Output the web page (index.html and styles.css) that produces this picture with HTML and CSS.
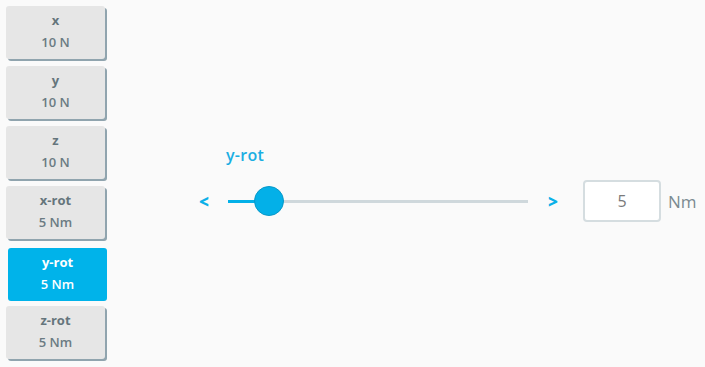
FILE: index.html
```html
<!DOCTYPE html>
<html>
<head>
<meta charset="utf-8">
<link rel="stylesheet" href="styles.css">
</head>
<body>
<div class="app">
  <nav class="side">
    <div class="btn"><span class="name">x</span><span class="val">10 N</span></div>
    <div class="btn"><span class="name">y</span><span class="val">10 N</span></div>
    <div class="btn"><span class="name">z</span><span class="val">10 N</span></div>
    <div class="btn"><span class="name">x-rot</span><span class="val">5 Nm</span></div>
    <div class="btn active"><span class="name">y-rot</span><span class="val">5 Nm</span></div>
    <div class="btn"><span class="name">z-rot</span><span class="val">5 Nm</span></div>
  </nav>
  <main class="main">
    <div class="control">
      <div class="label">y-rot</div>
      <div class="row">
        <span class="arrow left">&lt;</span>
        <div class="slider">
          <div class="fill" style="width: 41px"></div>
          <div class="thumb" style="left: 41px"></div>
        </div>
        <span class="arrow right">&gt;</span>
        <div class="input">5</div>
        <span class="unit">Nm</span>
      </div>
    </div>
  </main>
</div>
</body>
</html>
```
FILE: styles.css
```css
html, body {
  margin: 0;
  padding: 0;
  background: #fafafa;
  font-family: "Open Sans", "Noto Sans", sans-serif;
}
.app {
  display: flex;
  height: 367px;
}
.side {
  display: flex;
  flex-direction: column;
  gap: 7px;
  padding: 6px 0 0 6px;
  width: 101px;
}
.btn {
  box-sizing: border-box;
  width: 99px;
  height: 53px;
  padding-top: 3px;
  border-radius: 3px;
  background: #e6e6e6;
  box-shadow: 2px 2px 0 #90a4ae;
  display: flex;
  flex-direction: column;
  align-items: center;
  color: #6b7b83;
  font-size: 13px;
  line-height: 22px;
}
.btn .name { font-weight: 700; color: #65757c; }
.btn .val { font-weight: 600; }
.btn.active {
  background: #00b3ea;
  color: #fff;
  box-shadow: none;
  transform: translate(2px, 2px);
}
.btn.active .name { color: #fff; }
.main {
  flex: 1;
  padding-left: 92px;
  display: flex;
  align-items: flex-start;
}
.control {
  margin-top: 144px;
}
.label {
  margin-left: 27px;
  color: #1aaee2;
  font-size: 16px;
  font-weight: 600;
  letter-spacing: 0.3px;
  line-height: 23px;
  margin-bottom: 13px;
}
.row {
  display: flex;
  align-items: center;
  height: 42px;
}
.arrow {
  color: #0bb0e8;
  font-weight: 800;
  font-size: 17px;
  width: 9px;
}
.arrow.left { margin-right: 20px; }
.arrow.right { margin-left: 20px; margin-right: 26px; }
.slider {
  position: relative;
  width: 300px;
  height: 3px;
  background: #cfd8dc;
}
.fill {
  height: 3px;
  background: #03b0e8;
}
.thumb {
  position: absolute;
  top: -14px;
  width: 30px;
  height: 30px;
  margin-left: -15px;
  box-sizing: border-box;
  border-radius: 50%;
  background: #03b0e8;
  border: 1px solid #0998c8;
}
.input {
  box-sizing: border-box;
  width: 78px;
  height: 42px;
  border: 2px solid #d5dde0;
  border-radius: 4px;
  background: #fff;
  display: flex;
  align-items: center;
  justify-content: center;
  color: #7a7a7a;
  font-size: 16px;
}
.unit {
  margin-left: 7px;
  color: #7b8a91;
  font-size: 17px;
}
```
